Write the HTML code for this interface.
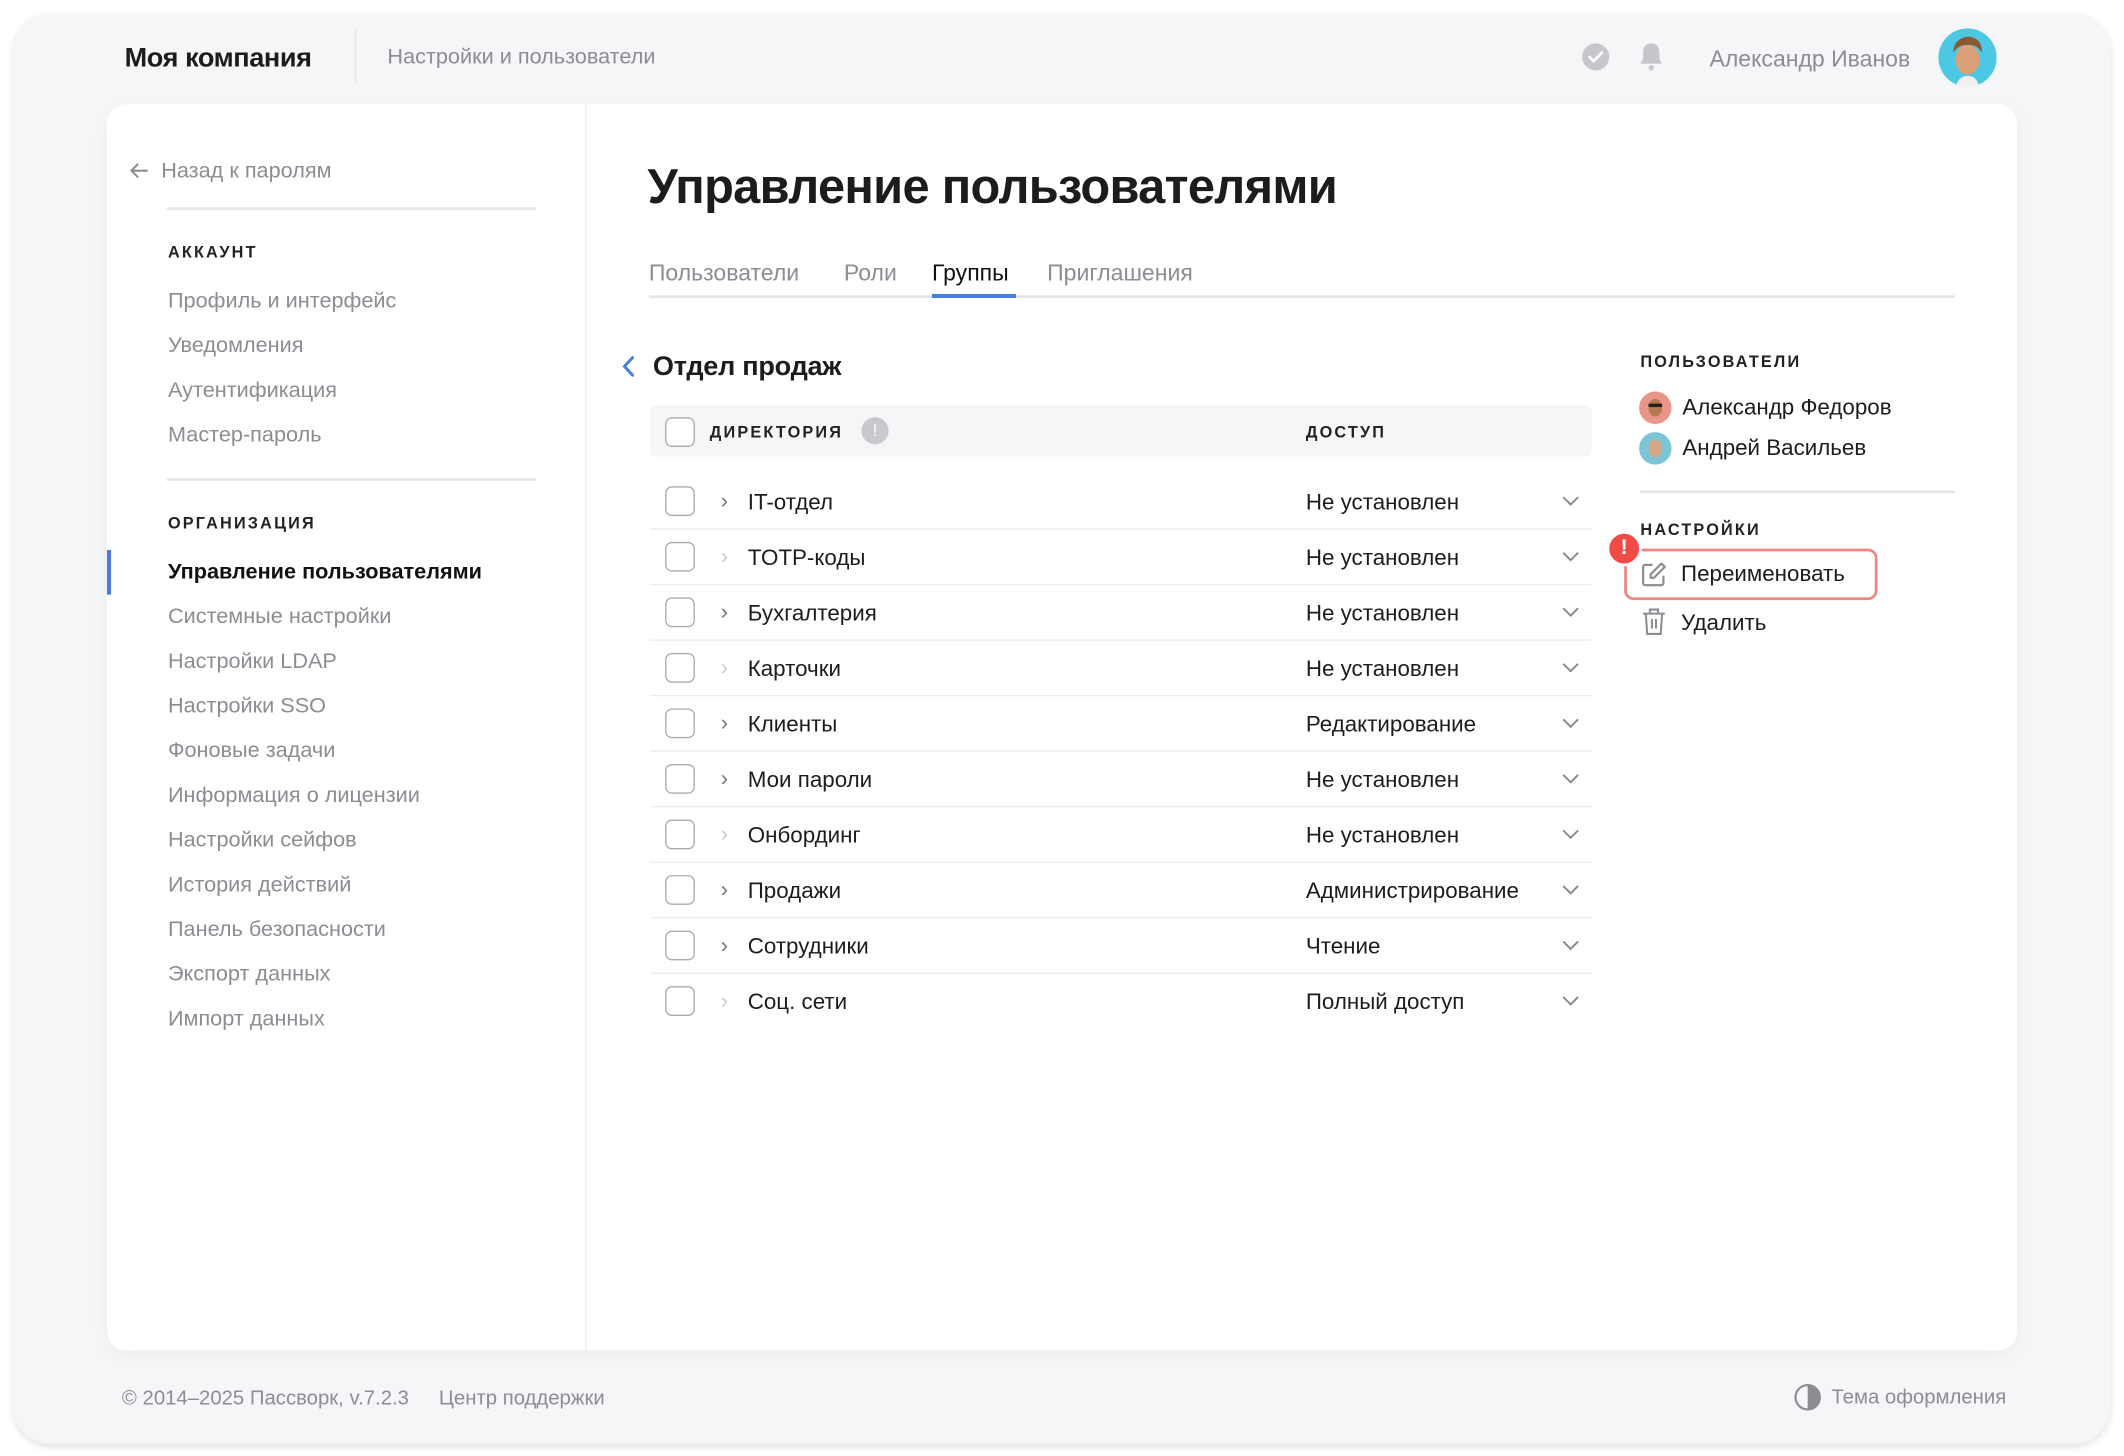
<!DOCTYPE html>
<html><head><meta charset="utf-8"><style>
*{box-sizing:border-box;margin:0;padding:0}
html,body{width:2124px;height:1456px;overflow:hidden;background:#fff}
body{font-family:"Liberation Sans","DejaVu Sans",sans-serif;color:#1c1c1e}
#w{position:absolute;left:0;top:0;width:1568px;height:1075px;transform:scale(1.35459);transform-origin:0 0}
.a{position:absolute;white-space:nowrap}
.win{position:absolute;left:10px;top:10px;width:1548px;height:1056px;background:#f5f6f8;border-radius:28px;box-shadow:0 2px 6px rgba(0,0,0,.12)}
.card{position:absolute;left:79px;top:77px;width:1410px;height:920px;background:#fff;border-radius:14px;box-shadow:0 4px 14px rgba(0,0,0,.04)}
.g{color:#8b8d92}
.sb{font-size:16px;color:#8b8d92;line-height:20px}
.cap{font-size:12px;font-weight:bold;letter-spacing:1.6px;color:#222}
.cb{position:absolute;width:22px;height:22px;border:1.5px solid #a9abb0;border-radius:5px;background:#fff}
.row{position:absolute;left:480px;width:695px;height:41px;border-bottom:1px solid #ececee}
.row span{position:absolute;top:11px;font-size:16.5px;line-height:20px}
.row svg{position:absolute;left:673px;top:16px}
</style></head><body><div id="w">
<div class="win"></div>
<div class="a" style="left:92px;top:32px;font-size:20px;font-weight:bold;letter-spacing:-.3px">Моя компания</div>
<div class="a" style="left:262px;top:22px;width:1px;height:40px;background:#e3e4e7"></div>
<div class="a g" style="left:286px;top:34px;font-size:16px">Настройки и пользователи</div>
<svg class="a" style="left:1167px;top:31px" width="22" height="22" viewBox="0 0 22 22"><circle cx="11" cy="11" r="10" fill="#c6c7ca"/><path d="M6.5 11.2l3 3 6-6.4" stroke="#fff" stroke-width="2" fill="none" stroke-linecap="round"/></svg>
<svg class="a" style="left:1208px;top:30px" width="22" height="24" viewBox="0 0 22 24"><path d="M11 2c-4 0-6 3-6 6.5v5L3 17h16l-2-3.5v-5C17 5 15 2 11 2z" fill="#c6c7ca"/><circle cx="11" cy="20" r="2" fill="#c6c7ca"/></svg>
<div class="a g" style="left:1262px;top:34px;font-size:17px">Александр Иванов</div>
<svg class="a" style="left:1431px;top:21px" width="43" height="43" viewBox="0 0 43 43"><circle cx="21.5" cy="21.5" r="21.5" fill="#4cc8e4"/><ellipse cx="21.5" cy="23" rx="9" ry="11" fill="#d9a07a"/><path d="M11 18c0-9 7-12 11-12s11 3 10 12c-2-4-5-6-10-6s-9 2-11 6z" fill="#8a5a2e"/><path d="M13 43c1-6 5-8 8.5-8s7.5 2 8.5 8z" fill="#f0f0f0"/></svg>

<div class="card"></div>
<div class="a" style="left:432px;top:77px;width:1px;height:920px;background:#ececee"></div>

<svg class="a" style="left:95px;top:119px" width="16" height="14" viewBox="0 0 16 14"><path d="M14 7H2M7 2L2 7l5 5" stroke="#8b8d92" stroke-width="1.5" fill="none"/></svg>
<div class="a sb" style="left:119px;top:117px">Назад к паролям</div>
<div class="a" style="left:123px;top:153px;width:273px;height:1.5px;background:#e6e7ea"></div>
<div class="a cap" style="left:124px;top:179px">АККАУНТ</div>
<div class="a sb" style="left:124px;top:213px">Профиль и интерфейс</div>
<div class="a sb" style="left:124px;top:246px">Уведомления</div>
<div class="a sb" style="left:124px;top:279px">Аутентификация</div>
<div class="a sb" style="left:124px;top:312px">Мастер-пароль</div>
<div class="a" style="left:123px;top:353px;width:273px;height:1.5px;background:#e6e7ea"></div>
<div class="a cap" style="left:124px;top:379px">ОРГАНИЗАЦИЯ</div>
<div class="a" style="left:79px;top:406px;width:3px;height:33px;background:#4a7de0"></div>
<div class="a sb" style="left:124px;top:413px;color:#111;font-weight:bold">Управление пользователями</div>
<div class="a sb" style="left:124px;top:446px">Системные настройки</div>
<div class="a sb" style="left:124px;top:479px">Настройки LDAP</div>
<div class="a sb" style="left:124px;top:512px">Настройки SSO</div>
<div class="a sb" style="left:124px;top:545px">Фоновые задачи</div>
<div class="a sb" style="left:124px;top:578px">Информация о лицензии</div>
<div class="a sb" style="left:124px;top:611px">Настройки сейфов</div>
<div class="a sb" style="left:124px;top:644px">История действий</div>
<div class="a sb" style="left:124px;top:677px">Панель безопасности</div>
<div class="a sb" style="left:124px;top:710px">Экспорт данных</div>
<div class="a sb" style="left:124px;top:743px">Импорт данных</div>

<div class="a" style="left:478px;top:117px;font-size:36px;font-weight:bold;letter-spacing:-.5px">Управление пользователями</div>
<div class="a g" style="left:479px;top:192px;font-size:17px">Пользователи</div>
<div class="a g" style="left:623px;top:192px;font-size:17px">Роли</div>
<div class="a" style="left:688px;top:192px;font-size:17px;color:#111">Группы</div>
<div class="a g" style="left:773px;top:192px;font-size:17px">Приглашения</div>
<div class="a" style="left:479px;top:218px;width:964px;height:1.5px;background:#e4e5e8"></div>
<div class="a" style="left:688px;top:217px;width:62px;height:3px;background:#4a7de0"></div>

<svg class="a" style="left:458px;top:262px" width="12" height="17" viewBox="0 0 12 17"><path d="M9 2L3 8.5 9 15" stroke="#4a7de0" stroke-width="2.2" fill="none" stroke-linecap="round"/></svg>
<div class="a" style="left:482px;top:260px;font-size:20px;font-weight:bold;letter-spacing:-.2px">Отдел продаж</div>

<div class="a" style="left:480px;top:299px;width:695px;height:38px;background:#f5f6f8;border-radius:4px"></div>
<div class="cb" style="left:491px;top:308px"></div>
<div class="a cap" style="left:524px;top:312px">ДИРЕКТОРИЯ</div>
<div class="a" style="left:636px;top:308px;width:20px;height:20px;border-radius:50%;background:#c8c9cc;color:#fff;font-size:12px;text-align:center;line-height:20px">!</div>
<div class="a cap" style="left:964px;top:312px">ДОСТУП</div>

<div class="row" style="top:350px"><div class="cb" style="left:11px;top:9px"></div><span style="left:52px;top:10px;color:#777">›</span><span style="left:72px">IT-отдел</span><span style="left:484px">Не установлен</span><svg width="13" height="8" viewBox="0 0 13 8"><path d="M1 1l5.5 5.5L12 1" stroke="#888" stroke-width="1.4" fill="none"/></svg></div>
<div class="row" style="top:391px"><div class="cb" style="left:11px;top:9px"></div><span style="left:52px;top:10px;color:#ccc">›</span><span style="left:72px">TOTP-коды</span><span style="left:484px">Не установлен</span><svg width="13" height="8" viewBox="0 0 13 8"><path d="M1 1l5.5 5.5L12 1" stroke="#888" stroke-width="1.4" fill="none"/></svg></div>
<div class="row" style="top:432px"><div class="cb" style="left:11px;top:9px"></div><span style="left:52px;top:10px;color:#777">›</span><span style="left:72px">Бухгалтерия</span><span style="left:484px">Не установлен</span><svg width="13" height="8" viewBox="0 0 13 8"><path d="M1 1l5.5 5.5L12 1" stroke="#888" stroke-width="1.4" fill="none"/></svg></div>
<div class="row" style="top:473px"><div class="cb" style="left:11px;top:9px"></div><span style="left:52px;top:10px;color:#ccc">›</span><span style="left:72px">Карточки</span><span style="left:484px">Не установлен</span><svg width="13" height="8" viewBox="0 0 13 8"><path d="M1 1l5.5 5.5L12 1" stroke="#888" stroke-width="1.4" fill="none"/></svg></div>
<div class="row" style="top:514px"><div class="cb" style="left:11px;top:9px"></div><span style="left:52px;top:10px;color:#777">›</span><span style="left:72px">Клиенты</span><span style="left:484px">Редактирование</span><svg width="13" height="8" viewBox="0 0 13 8"><path d="M1 1l5.5 5.5L12 1" stroke="#888" stroke-width="1.4" fill="none"/></svg></div>
<div class="row" style="top:555px"><div class="cb" style="left:11px;top:9px"></div><span style="left:52px;top:10px;color:#777">›</span><span style="left:72px">Мои пароли</span><span style="left:484px">Не установлен</span><svg width="13" height="8" viewBox="0 0 13 8"><path d="M1 1l5.5 5.5L12 1" stroke="#888" stroke-width="1.4" fill="none"/></svg></div>
<div class="row" style="top:596px"><div class="cb" style="left:11px;top:9px"></div><span style="left:52px;top:10px;color:#ccc">›</span><span style="left:72px">Онбординг</span><span style="left:484px">Не установлен</span><svg width="13" height="8" viewBox="0 0 13 8"><path d="M1 1l5.5 5.5L12 1" stroke="#888" stroke-width="1.4" fill="none"/></svg></div>
<div class="row" style="top:637px"><div class="cb" style="left:11px;top:9px"></div><span style="left:52px;top:10px;color:#777">›</span><span style="left:72px">Продажи</span><span style="left:484px">Администрирование</span><svg width="13" height="8" viewBox="0 0 13 8"><path d="M1 1l5.5 5.5L12 1" stroke="#888" stroke-width="1.4" fill="none"/></svg></div>
<div class="row" style="top:678px"><div class="cb" style="left:11px;top:9px"></div><span style="left:52px;top:10px;color:#777">›</span><span style="left:72px">Сотрудники</span><span style="left:484px">Чтение</span><svg width="13" height="8" viewBox="0 0 13 8"><path d="M1 1l5.5 5.5L12 1" stroke="#888" stroke-width="1.4" fill="none"/></svg></div>
<div class="row" style="top:719px;border-bottom:none"><div class="cb" style="left:11px;top:9px"></div><span style="left:52px;top:10px;color:#ccc">›</span><span style="left:72px">Соц. сети</span><span style="left:484px">Полный доступ</span><svg width="13" height="8" viewBox="0 0 13 8"><path d="M1 1l5.5 5.5L12 1" stroke="#888" stroke-width="1.4" fill="none"/></svg></div>

<div class="a cap" style="left:1211px;top:260px">ПОЛЬЗОВАТЕЛИ</div>
<svg class="a" style="left:1210px;top:289px" width="24" height="24" viewBox="0 0 24 24"><circle cx="12" cy="12" r="12" fill="#e8958a"/><ellipse cx="12" cy="12" rx="5" ry="6.5" fill="#b57a52"/><rect x="7" y="9" width="10" height="2.5" fill="#222"/></svg>
<div class="a" style="left:1242px;top:292px;font-size:16.5px">Александр Федоров</div>
<svg class="a" style="left:1210px;top:319px" width="24" height="24" viewBox="0 0 24 24"><circle cx="12" cy="12" r="12" fill="#7cc5d6"/><ellipse cx="12" cy="12" rx="5" ry="6.5" fill="#d5a888"/></svg>
<div class="a" style="left:1242px;top:322px;font-size:16.5px">Андрей Васильев</div>
<div class="a" style="left:1211px;top:362px;width:232px;height:1.5px;background:#e4e5e8"></div>
<div class="a cap" style="left:1211px;top:384px">НАСТРОЙКИ</div>
<div class="a" style="left:1199px;top:405px;width:187px;height:38px;border:2px solid #f08582;border-radius:7px"></div>
<div class="a" style="left:1186px;top:392px;width:26px;height:26px;border-radius:50%;background:#ef4b47;border:2px solid #fff;color:#fff;font-weight:bold;font-size:16px;text-align:center;line-height:22px">!</div>
<svg class="a" style="left:1211px;top:414px" width="20" height="20" viewBox="0 0 20 20"><path d="M9 3H3.5A1.5 1.5 0 0 0 2 4.5v12A1.5 1.5 0 0 0 3.5 18h12a1.5 1.5 0 0 0 1.5-1.5V11" stroke="#8b8d92" stroke-width="1.6" fill="none"/><path d="M15.5 2l2.5 2.5-8 8H7.5V10z" stroke="#8b8d92" stroke-width="1.6" fill="none" stroke-linejoin="round"/></svg>
<div class="a" style="left:1241px;top:415px;font-size:16.5px">Переименовать</div>
<svg class="a" style="left:1212px;top:448px" width="18" height="22" viewBox="0 0 18 22"><path d="M1 5h16M6 5V2h6v3M3 5l1 15h10l1-15M7.5 9v7M10.5 9v7" stroke="#8b8d92" stroke-width="1.5" fill="none"/></svg>
<div class="a" style="left:1241px;top:451px;font-size:16.5px">Удалить</div>

<div class="a g" style="left:90px;top:1024px;font-size:15px">© 2014–2025 Пассворк, v.7.2.3</div>
<div class="a g" style="left:324px;top:1024px;font-size:15px">Центр поддержки</div>
<svg class="a" style="left:1324px;top:1021px" width="21" height="21" viewBox="0 0 21 21"><circle cx="10.5" cy="10.5" r="9" stroke="#8b8d92" stroke-width="1.6" fill="none"/><path d="M10.5 1.5a9 9 0 0 1 0 18z" fill="#8b8d92"/></svg>
<div class="a g" style="left:1352px;top:1023px;font-size:15px">Тема оформления</div>
</div></body></html>
